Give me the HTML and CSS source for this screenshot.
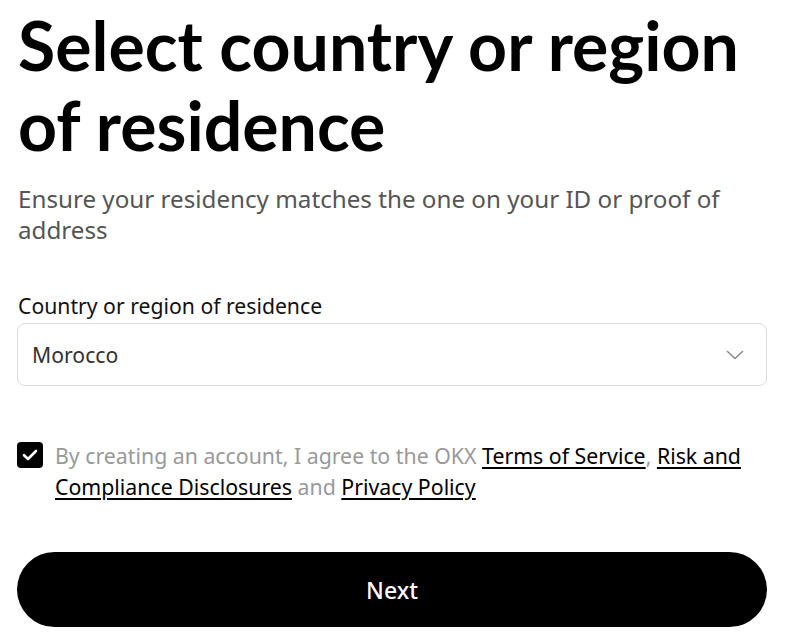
FILE: index.html
```html
<!DOCTYPE html>
<html lang="en">
<head>
<meta charset="utf-8">
<title>Select country or region of residence</title>
<link rel="stylesheet" href="styles.css">
</head>
<body>
<main class="page">
  <h1 class="title">Select country or region of residence</h1>
  <p class="subtitle">Ensure your residency matches the one on your ID or proof of address</p>

  <div class="field">
    <label class="field-label">Country or region of residence</label>
    <div class="select">
      <span class="select-value">Morocco</span>
      <svg class="chevron" width="18" height="10" viewBox="0 0 18 10" fill="none">
        <path d="M1.5 1.5 L9 8.5 L16.5 1.5" stroke="#8a8a8a" stroke-width="1.6" stroke-linecap="round" stroke-linejoin="round"/>
      </svg>
    </div>
  </div>

  <div class="agree">
    <span class="checkbox">
      <svg width="16" height="12" viewBox="0 0 16 12" fill="none">
        <path d="M2 6.2 L6 10 L14 2" stroke="#fff" stroke-width="2.6" stroke-linecap="round" stroke-linejoin="round"/>
      </svg>
    </span>
    <p class="agree-text">By creating an account, I agree to the OKX <a href="#">Terms of Service</a>, <a href="#">Risk and Compliance Disclosures</a> and <a href="#">Privacy Policy</a></p>
  </div>

  <button class="next">Next</button>
</main>
</body>
</html>
```

FILE: styles.css
```css
html, body {
  margin: 0;
  padding: 0;
  background: #fff;
}

.page {
  padding: 5px 25px 0 17px;
  font-family: "Noto Sans", "Liberation Sans", sans-serif;
  color: #000;
}

.title {
  margin: 0;
  font-family: "Lato", sans-serif;
  font-weight: 700;
  font-size: 68px;
  line-height: 80px;
  padding-left: 1px;
}

.subtitle {
  margin: 18px 0 0 1px;
  font-size: 24.2px;
  line-height: 31px;
  color: #555;
}

.field {
  margin-top: 46px;
}

.field-label {
  display: block;
  font-size: 21.2px;
  line-height: 30px;
  color: #111;
  padding-left: 1px;
}

.select {
  margin-top: 2px;
  height: 61px;
  border: 1px solid #dcdcdc;
  border-radius: 8px;
  display: flex;
  align-items: center;
  justify-content: space-between;
  padding: 0 22px 0 14px;
}

.select-value {
  font-size: 21.2px;
  color: #333;
}

.chevron {
  display: block;
}

.agree {
  margin-top: 54px;
  display: flex;
  align-items: flex-start;
  gap: 12px;
}

.checkbox {
  flex: none;
  width: 26px;
  height: 26px;
  margin-top: 2px;
  border-radius: 4px;
  background: #000;
  display: flex;
  align-items: center;
  justify-content: center;
}

.agree-text {
  margin: 0;
  font-size: 21.3px;
  line-height: 31px;
  color: #999;
}

.agree-text a {
  color: #000;
  text-decoration: underline;
  text-underline-offset: 3px;
}

.next {
  display: block;
  width: 750px;
  height: 75px;
  margin-top: 50px;
  border: none;
  border-radius: 38px;
  background: #000;
  color: #fff;
  font-family: "Noto Sans", sans-serif;
  font-size: 23px;
  font-weight: 500;
}
```
